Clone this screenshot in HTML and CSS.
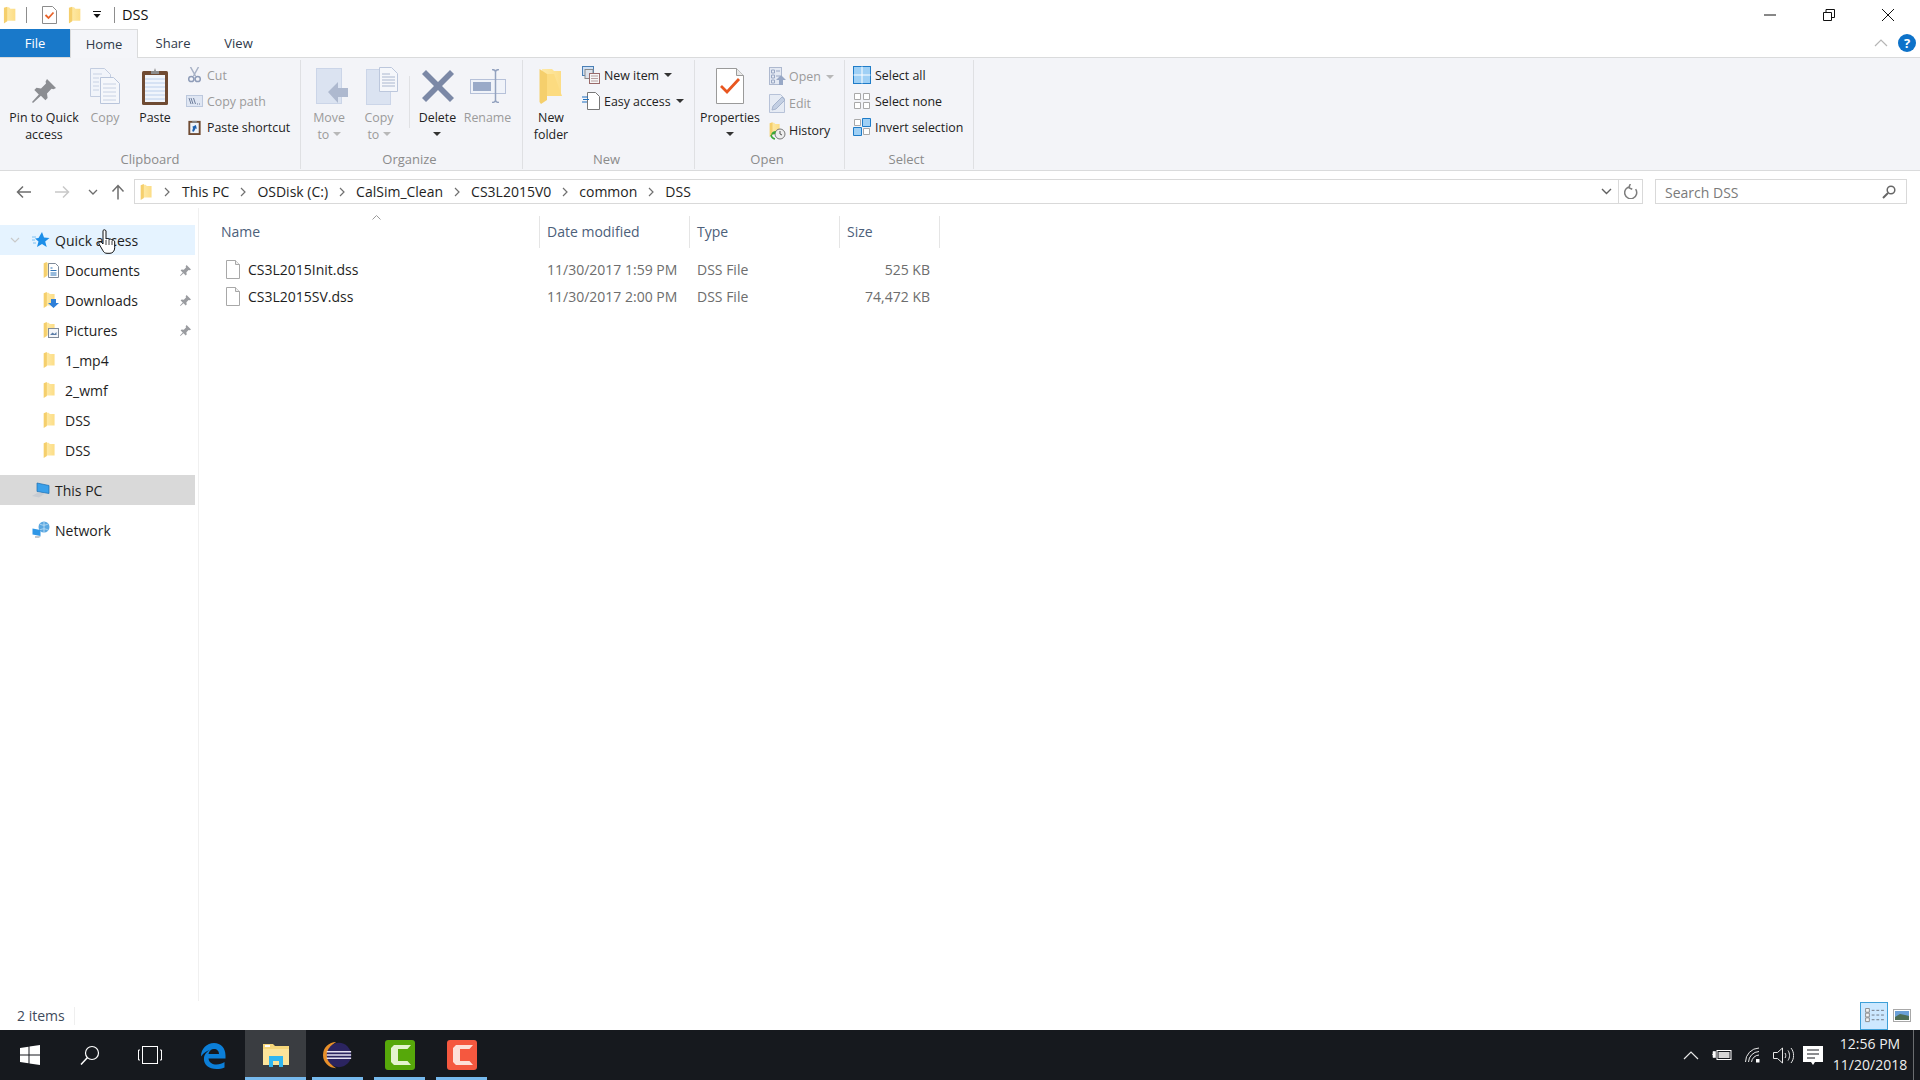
FILE: index.html
```html
<!DOCTYPE html>
<html lang="en">
<head>
<meta charset="utf-8">
<title>DSS</title>
<link rel="stylesheet" href="styles.css">
</head>
<body>
<svg class="sprite" aria-hidden="true">
  <defs>
    <linearGradient id="fg" x1="0" y1="0" x2="1" y2="0"><stop offset="0" stop-color="#feeaa8"/><stop offset="1" stop-color="#fcdd86"/></linearGradient>
    <symbol id="folder" viewBox="0 0 14 20">
      <path d="M3 1.500h3.500l1.500 1.500h5.500v13.500H3z" fill="url(#fg)"/>
      <path d="M.8 2 4.500 .8V17l-3.700 2.400z" fill="#f5cf6c"/>
    </symbol>
    <symbol id="doc" viewBox="0 0 16 19">
      <path d="M1.500.5h9l4 4v14h-13z" fill="#fff" stroke="#a8a8a8"/>
      <path d="M10.500.5v4h4" fill="#efefef" stroke="#a8a8a8"/>
    </symbol>
    <symbol id="pin" viewBox="0 0 13 13">
      <path d="M7.600 1 12 5.400 10.800 6.300 9.600 6l-2.200 2.200.3 2.200-1 1-2.200-2.200L1.500 12 1 11.500l2.800-3L1.600 6.400l1-1 2.200.3L7 3.500l-.3-1.200z" fill="#9a9ca0"/>
    </symbol>
  </defs>
</svg>

<div class="window">
  <header class="titlebar">
    <svg class="qa-folder"><use href="#folder"/></svg>
    <span class="qa-sep"></span>
    <svg class="qa-check" viewBox="0 0 15 18"><path d="M.5.5h10l4 4v13H.5z" fill="#fff" stroke="#8c8c8c"/><path d="M3.500 9l3 3 5-5.500" fill="none" stroke="#e8632a" stroke-width="1.800"/></svg>
    <svg class="qa-folder2"><use href="#folder"/></svg>
    <svg class="qa-drop" viewBox="0 0 8 7"><path d="M0 0h8v1H0zM.5 3h7L4 7z" fill="#111"/></svg>
    <span class="qa-sep qa-sep-2"></span>
    <span class="title-text">DSS</span>
    <div class="win-controls">
      <button class="win-btn"><svg viewBox="0 0 12 12"><path d="M0 6h12" stroke="#111" fill="none"/></svg></button>
      <button class="win-btn"><svg viewBox="0 0 12 12"><path d="M.5 3.500h8v8h-8zM3 3.500V.5h8.500v8h-3" stroke="#111" fill="none"/></svg></button>
      <button class="win-btn"><svg viewBox="0 0 12 12"><path d="M0 0l12 12M12 0L0 12" stroke="#111" fill="none"/></svg></button>
    </div>
  </header>

  <nav class="tabs">
    <span class="tab tab-file">File</span>
    <span class="tab tab-home">Home</span>
    <span class="tab tab-share">Share</span>
    <span class="tab tab-view">View</span>
    <div class="tabs-right">
      <svg class="collapse" viewBox="0 0 14 8"><path d="M1 7l6-6 6 6" fill="none" stroke="#b5b5b5" stroke-width="1.200"/></svg>
      <span class="help">?</span>
    </div>
  </nav>

  <section class="ribbon">
    <div class="group g-clipboard">
      <div class="group-body">
        <div class="big w-pin">
          <div class="big-icon"><svg class="i-pin" viewBox="0 0 26 25"><path d="M16 1l9 9-2.500 1.200-2-.4-4.500 4.700.6 4.500-2.200 2.200-4.500-4.500L2 25l-1-1 6.800-7.500-4.500-4.500 2.200-2.200 4.500.6L15 5.500l-.4-2z" fill="#8b8d92"/></svg></div>
          <span>Pin to Quick<br>access</span>
        </div>
        <div class="big w-copy dis">
          <div class="big-icon"><svg class="i-copy" viewBox="0 0 30 36"><path d="M.5.5h14l6 6v22H.5z" fill="#f1f4fa" stroke="#c3cde0"/><path d="M10.500 9.500h13l6 6v20h-19z" fill="#f5f7fb" stroke="#b9c5db"/><path d="M3 6h9M3 10h6M3 14h6M3 18h6M3 22h6M13 16h13M13 20h13M13 24h13M13 28h13M13 32h13" stroke="#c8d2e4"/></svg></div>
          <span>Copy</span>
        </div>
        <div class="big w-paste">
          <div class="big-icon"><svg class="i-paste" viewBox="0 0 26 37"><rect x="0" y="3" width="26" height="34" rx="1.500" fill="#6f4b33"/><rect x="3" y="7" width="20" height="27" fill="#f0f5fc"/><path d="M3 11h20M3 15h20M3 19h20M3 23h20M3 27h20M3 31h20" stroke="#bcd0ec"/><path d="M9 3h3l1-3 1 3h3v3H9z" fill="#8c8c8c"/></svg></div>
          <span>Paste</span>
        </div>
        <div class="small-col">
          <div class="small dis"><svg class="i-s" viewBox="0 0 14 16"><path d="M3 0l5 9M11 0L6 9" stroke="#a8b2c6" stroke-width="1.500" fill="none"/><circle cx="3.800" cy="12" r="2.600" fill="none" stroke="#8e9cb8" stroke-width="1.500"/><circle cx="10.200" cy="12" r="2.600" fill="none" stroke="#8e9cb8" stroke-width="1.500"/></svg><span>Cut</span></div>
          <div class="small dis"><svg class="i-s" viewBox="0 0 17 12"><rect x=".5" y=".5" width="16" height="11" fill="#dfe6f3" stroke="#bcc8dd"/><path d="M3 3l2 6M5 3l2 6M7.500 3l2 6M11 9h1M13 9h1" stroke="#6f7f9d" fill="none"/></svg><span>Copy path</span></div>
          <div class="small"><svg class="i-s" viewBox="0 0 14 17"><rect x=".5" y="2" width="13" height="15" fill="#6f4b33"/><rect x="2.500" y="4" width="9" height="11" fill="#eef3fa"/><path d="M4.500 2h5v2h-5z" fill="#888"/><path d="M4.500 13l1-4 -1.200-.5L8.500 6.500l1 4-1.200-.6-2 3.600z" fill="#1c5fae"/></svg><span>Paste shortcut</span></div>
        </div>
      </div>
      <div class="group-label label-first">Clipboard</div>
    </div>

    <div class="group g-organize">
      <div class="group-body">
        <div class="big w-move dis">
          <div class="big-icon"><svg class="i-move" viewBox="0 0 32 36"><rect x=".5" y=".5" width="25" height="35" fill="#dbe3f1" stroke="#cbd5e8"/><path d="M12 24 22 14v6h10v9H22v6z" fill="#aeb9cf"/></svg></div>
          <span>Move<br>to <i class="caret caret-dis"></i></span>
        </div>
        <div class="big w-copyto dis">
          <div class="big-icon"><svg class="i-copyto" viewBox="0 0 32 38"><rect x=".5" y="2.500" width="24" height="35" fill="#dbe3f1" stroke="#cbd5e8"/><path d="M13.500.5h12l6 6v18h-18z" fill="#f5f7fb" stroke="#bcc7dc"/><path d="M16 7h8M16 10h13M16 13h13M16 16h13M16 19h13" stroke="#aab7cf"/></svg></div>
          <span>Copy<br>to <i class="caret caret-dis"></i></span>
        </div>
        <span class="inner-sep"></span>
        <div class="big w-delete">
          <div class="big-icon"><svg class="i-delete" viewBox="0 0 32 32"><path d="M4 0l12 12L28 0l4 4-12 12 12 12-4 4-12-12L4 32l-4-4 12-12L0 4z" fill="#7b88a6"/></svg></div>
          <span>Delete<br><i class="caret"></i></span>
        </div>
        <div class="big w-rename dis">
          <div class="big-icon"><svg class="i-rename" viewBox="0 0 36 34"><rect x=".5" y="10.500" width="35" height="14" fill="#f0f3f9" stroke="#b6c1d9"/><rect x="3" y="13" width="18" height="9" fill="#9aaac8"/><path d="M22 .5c2 0 3 .6 3.500 2C26 1.100 27 .5 29 .5M25.500 2.500v29M22 33.500c2 0 3-.6 3.500-2 .5 1.400 1.500 2 3.500 2" fill="none" stroke="#93a2bf" stroke-width="1.500"/></svg></div>
          <span>Rename</span>
        </div>
      </div>
      <div class="group-label">Organize</div>
    </div>

    <div class="group g-new">
      <div class="group-body">
        <div class="big w-newfolder">
          <div class="big-icon"><svg class="i-newfolder" viewBox="0 0 24 36"><path d="M3 1h10l2 2h7v25H3z" fill="url(#fg)"/><path d="M.5 1 8 6v26l-6 4-1.500-2z" fill="#f5cf6c"/><path d="M8 6h7l8 22H8z" fill="#fcdb80"/></svg></div>
          <span>New<br>folder</span>
        </div>
        <div class="small-col">
          <div class="small"><svg class="i-s2" viewBox="0 0 18 18"><rect x=".5" y=".5" width="11" height="9" fill="#cfe0f5" stroke="#4a7fb5"/><rect x="3" y="3.500" width="8" height="9" fill="#dde3ec" stroke="#8a8a8a"/><rect x="7.500" y="7.500" width="10" height="10" fill="#f6f6f6" stroke="#9a6a6a"/><path d="M9 10h7M9 12.500h7M9 15h7" stroke="#b7a0a0"/></svg><span>New item</span><i class="caret"></i></div>
          <div class="small"><svg class="i-s2" viewBox="0 0 18 18"><path d="M5.500.5h8l4 4v13h-12z" fill="#fff" stroke="#777"/><path d="M0 5h6M1 7.500h6M0 10h5" stroke="#1c6fc0"/></svg><span>Easy access</span><i class="caret"></i></div>
        </div>
      </div>
      <div class="group-label">New</div>
    </div>

    <div class="group g-open">
      <div class="group-body">
        <div class="big w-props">
          <div class="big-icon"><svg class="i-props" viewBox="0 0 28 36"><path d="M.5.5h20l7 7v28H.5z" fill="#fff" stroke="#9a9a9a"/><path d="M20.500.5v7h7" fill="#e8e8e8" stroke="#9a9a9a"/><path d="M5 18l6 6 12-13" fill="none" stroke="#e8561f" stroke-width="2.800"/></svg></div>
          <span>Properties<br><i class="caret"></i></span>
        </div>
        <div class="small-col small-col-open">
          <div class="small dis"><svg class="i-s3" viewBox="0 0 17 19"><rect x=".5" y=".5" width="12" height="17" fill="#e4e9f3" stroke="#aeb9cf"/><path d="M2.500 3h3v3h-3zM2.500 8h3v3h-3zM2.500 13h3v3h-3zM7 4h4M7 9h4" stroke="#9aa8c4" fill="none"/><path d="M12 8l5 5h-3v5h-4v-5H7z" fill="#98a8c6"/></svg><span>Open</span><i class="caret caret-dis"></i></div>
          <div class="small dis"><svg class="i-s3" viewBox="0 0 17 19"><path d="M.5.5h11l4 4v14H.5z" fill="#e6ebf4" stroke="#b7c2d8"/><path d="M3 16l1-4L13 3l3 3-9 9z" fill="#c3cfe3" stroke="#a6b4cd"/></svg><span>Edit</span></div>
          <div class="small"><svg class="i-s3" viewBox="0 0 17 19"><use href="#folder" width="11" height="17"/><circle cx="11" cy="13" r="5" fill="#eee" stroke="#777"/><path d="M11 10v3l2 1" stroke="#555" fill="none"/><path d="M2 14a5 5 0 0 1 5-4l-1 3z" fill="#3aa63a"/><path d="M2 14a5 5 0 0 0 4 4" stroke="#3aa63a" stroke-width="1.500" fill="none"/></svg><span>History</span></div>
        </div>
      </div>
      <div class="group-label">Open</div>
    </div>

    <div class="group g-select">
      <div class="group-body">
        <div class="small-col">
          <div class="small"><svg class="i-s4" viewBox="0 0 18 18"><rect x=".5" y=".5" width="17" height="17" fill="#9fd0f5" stroke="#1f7cc8"/><path d="M9 .5v17M.5 9h17" stroke="#fff" stroke-width="1"/></svg><span>Select all</span></div>
          <div class="small"><svg class="i-s4" viewBox="0 0 18 18"><path d="M1.500 1.500h6v6h-6zM10.500 1.500h6v6h-6zM1.500 10.500h6v6h-6zM10.500 10.500h6v6h-6z" fill="#fff" stroke="#a9a9a9"/></svg><span>Select none</span></div>
          <div class="small"><svg class="i-s4" viewBox="0 0 18 18"><path d="M1.500 1.500h6v6h-6zM10.500 10.500h6v6h-6z" fill="#fff" stroke="#a9a9a9"/><path d="M9.500.5h8v8h-8zM.5 9.500h8v8h-8z" fill="#9fd0f5" stroke="#1f7cc8"/></svg><span>Invert selection</span></div>
        </div>
      </div>
      <div class="group-label">Select</div>
    </div>
  </section>

  <div class="addr-row">
    <span class="nav n-back"><svg viewBox="0 0 16 14"><path d="M15 7H2M7 1.500 1.500 7 7 12.500" fill="none" stroke="#6d6d6d" stroke-width="1.500"/></svg></span>
    <span class="nav n-fwd"><svg viewBox="0 0 16 14"><path d="M1 7h13M9 1.500 14.500 7 9 12.500" fill="none" stroke="#c8c8c8" stroke-width="1.500"/></svg></span>
    <span class="nav n-drop"><svg viewBox="0 0 10 6"><path d="M1 1l4 4 4-4" fill="none" stroke="#6d6d6d" stroke-width="1.300"/></svg></span>
    <span class="nav n-up"><svg viewBox="0 0 14 16"><path d="M7 15.500V2M1.500 7.500 7 1.500l5.500 6" fill="none" stroke="#6d6d6d" stroke-width="1.500"/></svg></span>
    <div class="address">
      <svg class="addr-folder"><use href="#folder"/></svg>
      <span class="crumb-sep crumb-first"><svg viewBox="0 0 6 10"><path d="M1 1l4 4-4 4" fill="none" stroke="#707070" stroke-width="1.200"/></svg></span>
      <span class="crumb">This PC</span>
      <span class="crumb-sep"><svg viewBox="0 0 6 10"><path d="M1 1l4 4-4 4" fill="none" stroke="#707070" stroke-width="1.200"/></svg></span>
      <span class="crumb">OSDisk (C:)</span>
      <span class="crumb-sep"><svg viewBox="0 0 6 10"><path d="M1 1l4 4-4 4" fill="none" stroke="#707070" stroke-width="1.200"/></svg></span>
      <span class="crumb">CalSim_Clean</span>
      <span class="crumb-sep"><svg viewBox="0 0 6 10"><path d="M1 1l4 4-4 4" fill="none" stroke="#707070" stroke-width="1.200"/></svg></span>
      <span class="crumb">CS3L2015V0</span>
      <span class="crumb-sep"><svg viewBox="0 0 6 10"><path d="M1 1l4 4-4 4" fill="none" stroke="#707070" stroke-width="1.200"/></svg></span>
      <span class="crumb">common</span>
      <span class="crumb-sep"><svg viewBox="0 0 6 10"><path d="M1 1l4 4-4 4" fill="none" stroke="#707070" stroke-width="1.200"/></svg></span>
      <span class="crumb">DSS</span>
      <span class="addr-drop"><svg viewBox="0 0 11 7"><path d="M1 1l4.500 4.500L10 1" fill="none" stroke="#606060" stroke-width="1.400"/></svg></span>
      <span class="addr-refresh"><svg viewBox="0 0 14 15"><path d="M4 3.500a6 6 0 1 0 6 0M3 1v4h4" fill="none" stroke="#7d7d7d" stroke-width="1.500" transform="rotate(25 7 8)"/></svg></span>
    </div>
    <div class="search">
      <span>Search DSS</span>
      <svg viewBox="0 0 14 14"><circle cx="9" cy="5" r="3.800" fill="none" stroke="#666" stroke-width="1.500"/><path d="M6 8l-5 5" stroke="#666" stroke-width="2"/></svg>
    </div>
  </div>

  <main class="content">
    <aside class="sidebar">
      <div class="tree-row top hover">
        <svg class="chev" viewBox="0 0 10 6"><path d="M1 1l4 4 4-4" fill="none" stroke="#c9c9c9" stroke-width="1.200"/></svg>
        <svg class="top-icon" viewBox="0 0 18 18"><path d="M10 1l2 5.500 5.500.4-4.300 3.500 1.500 5.600L10 13l-5 3 1.500-5.600L3 7.500l3.500-.5z" fill="#1c8ee8"/><path d="M0 6h4M0 9h3M1 12h3" stroke="#7cc0f2"/></svg>
        <span>Quick access</span>
      </div>
      <div class="tree-row sub"><span class="sub-icon"><svg viewBox="0 0 16 19"><use href="#folder" width="12" height="18"/><path d="M5.500 2.500h7l3 3v11h-10z" fill="#fff" stroke="#7f8a99"/><path d="M7.500 7h2M7.500 9.500h6M7.500 12h6M7.500 14h6" stroke="#2f74b8"/></svg></span><span class="lbl">Documents</span><svg class="pin"><use href="#pin"/></svg></div>
      <div class="tree-row sub"><span class="sub-icon"><svg viewBox="0 0 16 19"><use href="#folder" width="12" height="18"/><path d="M8 8h5v4h3l-5.500 5L5 12h3z" fill="#2f80d8"/></svg></span><span class="lbl">Downloads</span><svg class="pin"><use href="#pin"/></svg></div>
      <div class="tree-row sub"><span class="sub-icon"><svg viewBox="0 0 16 19"><use href="#folder" width="12" height="18"/><rect x="5.500" y="7.500" width="10" height="9" fill="#f4f6f9" stroke="#7f8a99"/><path d="M7 14l2.500-2.500 2 1.500 2-2v3z" fill="#5c7ea8"/></svg></span><span class="lbl">Pictures</span><svg class="pin"><use href="#pin"/></svg></div>
      <div class="tree-row sub"><span class="sub-icon"><svg viewBox="0 0 16 19"><use href="#folder" width="12" height="18"/></svg></span><span class="lbl">1_mp4</span></div>
      <div class="tree-row sub"><span class="sub-icon"><svg viewBox="0 0 16 19"><use href="#folder" width="12" height="18"/></svg></span><span class="lbl">2_wmf</span></div>
      <div class="tree-row sub"><span class="sub-icon"><svg viewBox="0 0 16 19"><use href="#folder" width="12" height="18"/></svg></span><span class="lbl">DSS</span></div>
      <div class="tree-row sub"><span class="sub-icon"><svg viewBox="0 0 16 19"><use href="#folder" width="12" height="18"/></svg></span><span class="lbl">DSS</span></div>
      <div class="tree-row top selected">
        <span class="chev"></span>
        <svg class="top-icon" viewBox="0 0 18 16"><path d="M5 1l12 2.500v8L5 9.500z" fill="#3aa0ea" stroke="#1c6fb0" stroke-width=".7"/><path d="M0 14l6-3.500 7 1-6 4z" fill="#c8ccd2"/></svg>
        <span>This PC</span>
      </div>
      <div class="tree-row top net">
        <span class="chev"></span>
        <svg class="top-icon" viewBox="0 0 18 18"><circle cx="12" cy="6" r="5.500" fill="#5aa7e0"/><path d="M8 3c3 2 6 1 8 0M8 9c3-2 6-1 8 0M12 .5v11" stroke="#c7e3f7" fill="none" stroke-width=".8"/><path d="M.5 7.500l8 1.500v6l-8-1.500z" fill="#2e96e6"/><path d="M3 15h6l-2 2H3z" fill="#c2c7cd"/></svg>
        <span>Network</span>
      </div>
    </aside>

    <section class="files">
      <div class="cols head">
        <div class="hcell hname">Name<svg class="sort" viewBox="0 0 9 5"><path d="M.5 4.500l4-4 4 4" fill="none" stroke="#9a9a9a"/></svg></div>
        <div class="hcell">Date modified</div>
        <div class="hcell">Type</div>
        <div class="hcell">Size</div>
      </div>
      <div class="rows">
        <div class="cols frow">
          <div class="fname"><svg class="ficon"><use href="#doc"/></svg><span>CS3L2015Init.dss</span></div>
          <div class="fcell">11/30/2017 1:59 PM</div>
          <div class="fcell">DSS File</div>
          <div class="fcell fsize">525 KB</div>
        </div>
        <div class="cols frow">
          <div class="fname"><svg class="ficon"><use href="#doc"/></svg><span>CS3L2015SV.dss</span></div>
          <div class="fcell">11/30/2017 2:00 PM</div>
          <div class="fcell">DSS File</div>
          <div class="fcell fsize">74,472 KB</div>
        </div>
      </div>
    </section>
  </main>

  <div class="status">
    <span class="count">2 items</span>
    <span class="status-sep"></span>
    <div class="views">
      <span class="view view-on"><svg viewBox="0 0 20 16"><path d="M.5.5h4v4h-4zM.5 5.500h4v4h-4zM.5 10.500h4v4h-4z" fill="#f4f4f4" stroke="#8a8a8a"/><path d="M7 2.500h3M12 2.500h3M17 2.500h3M7 7.500h3M12 7.500h3M17 7.500h3M7 12.500h3M12 12.500h3M17 12.500h3" stroke="#6d7480"/></svg></span>
      <span class="view"><svg viewBox="0 0 18 13"><rect x=".5" y=".5" width="17" height="12" fill="#fff" stroke="#a8a8a8"/><rect x="2" y="2" width="14" height="9" fill="#6aa0d8"/><path d="M2 8l5-3 5 1 4 1v4H2z" fill="#4d6d55"/></svg></span>
    </div>
  </div>

  <footer class="taskbar">
    <span class="tb tb-start"><svg viewBox="0 0 20 20"><path d="M0 3l8.500-1.200V9.500H0zM9.500 1.600 20 0v9.500H9.500zM0 10.500h8.500v7.700L0 17zM9.500 10.500H20V20L9.500 18.400z" fill="#fff"/></svg></span>
    <span class="tb tb-search"><svg viewBox="0 0 20 20"><circle cx="12" cy="8" r="6.500" fill="none" stroke="#fff" stroke-width="1.200"/><path d="M7.500 12.500 1 19.500" stroke="#fff" stroke-width="1.500"/></svg></span>
    <span class="tb tb-tasks"><svg viewBox="0 0 24 18"><rect x="4.500" y=".5" width="15" height="17" fill="none" stroke="#fff"/><path d="M2 4H.5v10H2M22 4h1.500v10H22" fill="none" stroke="#fff"/></svg></span>
    <span class="tb tb-edge"><svg viewBox="0 0 26 26"><path d="M1 14C1 6 7 .5 14 .5c7 0 11.500 5 11.500 12.500v3H8.500c.5 4 4 6 8 6 3 0 6-1 8-2.500v5.500c-2.500 1.200-5 1.500-8 1.500C9 26.500 3 22 4 15c.6-4 4-7 7-8C7 8 4 10 1 14zM8.500 11.500h10.500c0-3-2-5-5-5s-5 2-5.500 5z" fill="#0c7fd8"/></svg></span>
    <span class="tb app app-explorer"><svg viewBox="0 0 28 24"><path d="M1 1h10l2 2h14v19H1z" fill="#f6d77a"/><rect x="3" y="2" width="5" height="2" fill="#fff"/><rect x="1" y="6" width="26" height="16" fill="#fbe49a"/><path d="M7 24V13h14v11h-4v-6h-6v6z" fill="#2fb6f0"/></svg></span>
    <span class="tb app app-eclipse"><svg viewBox="0 0 32 30"><path d="M14 1A14 14 0 0 0 14 29 16 16 0 0 1 14 1z" fill="#e8902a"/><circle cx="17" cy="15" r="13" fill="#2b2460"/><path d="M4 11.500h26M4 15h26M4 18.500h26" stroke="#e6e2f4" stroke-width="1.600"/></svg></span>
    <span class="tb app app-green"><svg viewBox="0 0 30 30"><rect width="30" height="30" rx="3" fill="#56a80a"/><path d="M9 5h17l-3.500 4H13v12h9.500l3.500 4H9l-3-3V8z" fill="#e4f3cf"/></svg></span>
    <span class="tb app app-red"><svg viewBox="0 0 30 30"><rect width="30" height="30" rx="3" fill="#f5583f"/><path d="M9 5h17l-3.500 4H13v12h9.500l3.500 4H9l-3-3V8z" fill="#fde0d8"/></svg></span>
    <div class="tray">
      <span class="tr"><svg class="t-caret" viewBox="0 0 16 9"><path d="M1 8l7-7 7 7" fill="none" stroke="#e8e8e8" stroke-width="1.200"/></svg></span>
      <span class="tr tr-wide"><svg class="t-batt" viewBox="0 0 20 14"><rect x="5" y="2.500" width="14" height="9" fill="#16191e" stroke="#fff"/><rect x="6.500" y="4" width="11" height="6" fill="#d6d6d6"/><path d="M0 6.500h3M1 3.500h2.500v6H1z" fill="#fff" stroke="#fff" stroke-width=".6"/></svg></span>
      <span class="tr tr-wide"><svg class="t-wifi" viewBox="0 0 16 16"><path d="M.5 15A14 14 0 0 1 14 1M3.500 15A11 11 0 0 1 14 4.500M6.500 15A8 8 0 0 1 14 8" fill="none" stroke="#e8e8e8"/><rect x="11" y="12" width="3.500" height="3.500" fill="#fff"/></svg></span>
      <span class="tr"><svg class="t-vol" viewBox="0 0 21 17"><path d="M.5 5.500h4l5-4.500v15l-5-4.500h-4z" fill="none" stroke="#e8e8e8"/><path d="M12 6c1 1.500 1 3.500 0 5M15 3.500c2 3 2 7 0 10M18 1c3.500 4.500 3.500 10.500 0 15" fill="none" stroke="#e8e8e8"/></svg></span>
      <span class="tr"><svg class="t-note" viewBox="0 0 20 19"><path d="M0 0h20v16h-8l-2 3-2-3H0z" fill="#fff"/><path d="M4 4h12M4 8h12M4 12h8" stroke="#16191e"/></svg></span>
      <div class="clock"><span>12:56 PM</span><span>11/20/2018</span></div>
      <span class="show-desktop"></span>
    </div>
  </footer>

  <svg class="cursor" viewBox="0 0 18 26"><path d="M5 1.500c1-1 2.500-1 3 .5v8c1-1 2.500-.5 3 .5 1-.8 2.500-.5 3 .8 1-.5 2.500 0 2.700 1.500v6c0 3-2 5.500-4.700 5.500H9c-2 0-3.200-1-4-2.500L1 15c-.8-1.500 1-3 2.500-1.500L5 15z" fill="#fff" stroke="#111" stroke-width="1"/><path d="M8 11v5M11 11v5M14 12v4" stroke="#111" stroke-width=".8"/></svg>
</div>
</body>
</html>
```

FILE: styles.css
```css
* { box-sizing: border-box; }
html, body { margin: 0; padding: 0; }
body {
  width: 1920px;
  height: 1080px;
  overflow: hidden;
  background: #fff;
  font-family: "Open Sans", "Liberation Sans", sans-serif;
  font-size: 14px;
  color: #1e1e1e;
}
svg { display: block; flex: none; }
.sprite { width: 0; height: 0; overflow: hidden; }
.window {
  position: relative;
  width: 1920px;
  height: 1080px;
  display: flex;
  flex-direction: column;
}

/* title bar */
.titlebar { height: 29px; display: flex; align-items: center; flex: none; }
.qa-folder { width: 13px; height: 18px; margin-left: 3px; }
.qa-sep { width: 1px; height: 16px; background: #8d8d8d; margin-left: 10px; }
.qa-check { width: 15px; height: 18px; margin-left: 15px; }
.qa-folder2 { width: 13px; height: 18px; margin-left: 11px; }
.qa-drop { width: 8px; height: 7px; margin-left: 12px; }
.qa-sep-2 { margin-left: 13px; }
.title-text { margin-left: 7px; font-size: 14.5px; color: #111; }
.win-controls { margin-left: auto; margin-right: 3px; display: flex; }
.win-btn {
  width: 59px; height: 29px; padding: 0; border: 0; background: none;
  display: flex; align-items: center; justify-content: center;
}
.win-btn svg { width: 12px; height: 12px; }

/* tabs */
.tabs { height: 29px; flex: none; display: flex; align-items: stretch; border-bottom: 1px solid #dadbdc; font-size: 13px; }
.tab { display: flex; align-items: center; justify-content: center; height: 28px; color: #2f3a4a; }
.tab-file { width: 70px; background: #1979ca; color: #fff; }
.tab-home { width: 68px; height: 29px; background: #f4f5f9; border: 1px solid #dadbdc; border-bottom: 0; }
.tab-share { width: 70px; }
.tab-view { width: 61px; }
.tabs-right { margin-left: auto; display: flex; align-items: center; padding-right: 4px; }
.collapse { width: 14px; height: 8px; }
.help {
  width: 18px; height: 18px; margin-left: 10px; border-radius: 50%;
  background: #0d72c9; color: #fff; font-weight: 700; font-size: 13px;
  display: flex; align-items: center; justify-content: center;
}

/* ribbon */
.ribbon {
  height: 113px; flex: none; display: flex; background: #f3f4f8;
  border-bottom: 1px solid #dadbdc; font-size: 12.4px; color: #222;
}
.group { display: flex; flex-direction: column; margin: 2px 0 1px; border-right: 1px solid #dfe0e3; }
.group-body { flex: 1; display: flex; }
.group-label { height: 18px; line-height: 17px; margin-top: -1px; padding-right: 5px; text-align: center; color: #8b8b8b; font-size: 13px; }
.label-first { padding-right: 0; }
.g-clipboard { width: 301px; }
.g-organize { width: 222px; padding-left: 1px; }
.g-new { width: 172px; padding-left: 1px; }
.g-open { width: 150px; }
.g-select { width: 129px; }

.big { display: flex; flex-direction: column; align-items: center; text-align: center; line-height: 17px; white-space: nowrap; }
.big-icon { height: 49px; padding-top: 3px; display: flex; align-items: center; justify-content: center; flex: none; }
.w-pin { width: 80px; margin-left: 4px; }
.w-copy { width: 42px; }
.w-paste { width: 58px; }
.w-move { width: 54px; }
.w-copyto { width: 46px; }
.w-delete { width: 41px; }
.w-rename { width: 59px; }
.w-newfolder { width: 54px; }
.w-props { width: 70px; }
.dis { color: #9b9b9b; }

.i-pin { width: 26px; height: 25px; margin-top: 8px; }
.i-copy { width: 30px; height: 36px; }
.i-paste { width: 26px; height: 37px; }
.i-move { width: 32px; height: 36px; margin-left: 6px; }
.i-copyto { width: 32px; height: 38px; margin-left: 6px; }
.i-delete { width: 32px; height: 32px; }
.i-rename { width: 36px; height: 34px; }
.i-newfolder { width: 24px; height: 36px; }
.i-props { width: 28px; height: 36px; }

.inner-sep { width: 1px; height: 52px; margin: 16px 7px 0; background: #e0e1e4; }
.caret {
  display: inline-block; width: 0; height: 0; vertical-align: middle;
  border-left: 4px solid transparent; border-right: 4px solid transparent; border-top: 4px solid #333;
}
.big .caret { vertical-align: 3px; }
.caret-dis { border-top-color: #b8b8b8; }

.small-col { padding-top: 2px; display: flex; flex-direction: column; }
.small { height: 26px; display: flex; align-items: center; padding-left: 2px; white-space: nowrap; }
.small .caret { margin-left: 5px; }
.small-col-open { padding-top: 3px; }
.small-col-open .small { height: 27px; padding-left: 4px; }
.i-s { width: 17px; height: 16px; margin-right: 4px; }
.i-s2 { width: 18px; height: 18px; margin: 0 4px 0 1px; }
.i-s3 { width: 17px; height: 19px; margin-right: 3px; }
.i-s4 { width: 18px; height: 18px; margin-right: 4px; }
.g-select .small { padding-left: 8px; }
.g-new .small { padding-left: 3px; }

/* address row */
.addr-row { height: 37px; flex: none; display: flex; align-items: flex-start; padding-top: 8px; }
.nav { height: 25px; display: flex; align-items: center; justify-content: center; flex: none; }
.n-back { width: 38px; margin-left: 5px; }
.n-back svg, .n-fwd svg { width: 16px; height: 14px; }
.n-fwd { width: 38px; }
.n-drop { width: 23px; }
.n-drop svg { width: 10px; height: 6px; }
.n-up { width: 28px; }
.n-up svg { width: 14px; height: 16px; }
.address {
  flex: 1; height: 25px; margin-left: 2px; margin-right: 12px;
  border: 1px solid #d9d9d9; display: flex; align-items: center;
}
.addr-folder { width: 12px; height: 18px; margin-left: 5px; }
.crumb { color: #1e1e1e; white-space: nowrap; }
.crumb-sep { width: 28px; display: flex; justify-content: center; }
.crumb-sep svg { width: 6px; height: 10px; }
.crumb-first { width: 30px; }
.addr-drop {
  margin-left: auto; width: 25px; height: 23px; display: flex; align-items: center; justify-content: center;
  border-right: 1px solid #d9d9d9;
}
.addr-drop svg { width: 11px; height: 7px; }
.addr-refresh { width: 23px; height: 23px; display: flex; align-items: center; justify-content: center; }
.addr-refresh svg { width: 14px; height: 15px; }
.search {
  width: 252px; height: 25px; margin-right: 13px; flex: none;
  border: 1px solid #d9d9d9; display: flex; align-items: center; justify-content: space-between;
  padding: 1px 10px 0 9px; color: #7a7a7a;
}
.search svg { width: 14px; height: 14px; }

/* main */
.content { flex: 1; display: flex; min-height: 0; }
.sidebar { width: 199px; flex: none; padding-top: 17px; padding-right: 3px; border-right: 1px solid #f0f0f0; }
.tree-row { height: 30px; display: flex; align-items: center; white-space: nowrap; }
.hover { background: #e5f3ff; }
.selected { background: #d9d9d9; margin-top: 10px; }
.net { margin-top: 10px; }
.chev { width: 10px; height: 6px; margin-left: 10px; flex: none; }
.top-icon { width: 18px; height: 18px; margin-left: 12px; margin-right: 5px; }
.sub { padding-left: 43px; }
.sub-icon { width: 16px; height: 19px; flex: none; }
.sub-icon svg { width: 16px; height: 19px; }
.lbl { margin-left: 6px; }
.pin { width: 13px; height: 13px; margin-left: auto; margin-right: 3px; }

.files { flex: 1; padding-top: 8px; }
.cols { display: grid; grid-template-columns: 341px 150px 150px 100px; }
.head { height: 32px; }
.hcell { color: #4c607a; padding-left: 7px; border-right: 1px solid #e5e5e5; line-height: 32px; }
.hname { position: relative; padding-left: 22px; }
.sort { position: absolute; left: 173px; top: -1px; width: 9px; height: 5px; }
.rows { padding-top: 8px; }
.frow { height: 27px; align-items: center; }
.fname { display: flex; align-items: center; padding-left: 26px; }
.ficon { width: 16px; height: 19px; margin-right: 7px; }
.fcell { padding-left: 7px; color: #6d6d6d; white-space: nowrap; }
.fsize { text-align: right; padding-right: 10px; }

/* status */
.status { height: 29px; flex: none; display: flex; align-items: center; }
.count { margin-left: 17px; color: #3f4b5c; }
.status-sep { width: 1px; height: 18px; margin-left: 9px; background: #efefef; }
.views { margin-left: auto; margin-right: 9px; display: flex; align-items: center; }
.view { width: 18px; height: 28px; display: flex; align-items: center; justify-content: center; }
.view svg { width: 18px; height: 13px; }
.view-on { width: 28px; background: #cce8ff; border: 1px solid #3ea0d8; margin-right: 5px; }
.view-on svg { width: 19px; height: 15px; }

/* taskbar */
.taskbar { height: 50px; flex: none; display: flex; background: #16191e; color: #f2f2f2; }
.tb { width: 60px; height: 50px; display: flex; align-items: center; justify-content: center; flex: none; }
.tb-start svg { width: 20px; height: 20px; }
.tb-search svg { width: 20px; height: 20px; }
.tb-tasks svg { width: 24px; height: 18px; }
.tb-edge { margin-left: 2px; width: 61px; }
.tb-edge svg { width: 26px; height: 27px; }
.app { border-bottom: 3px solid #76b9ed; width: 51px; padding-top: 3px; }
.app svg { width: 30px; height: 30px; }
.app-explorer { width: 61px; margin-left: 2px; background: #3a3d41; }
.app-explorer svg { width: 28px; height: 24px; }
.app-eclipse { margin-left: 6px; }
.app-green, .app-red { margin-left: 11px; }
.tray { margin-left: auto; display: flex; align-items: center; }
.tr { width: 30px; height: 50px; display: flex; align-items: center; justify-content: center; flex: none; }
.tr-wide { width: 31px; }
.t-caret { width: 16px; height: 9px; }
.t-batt { width: 20px; height: 14px; }
.t-wifi { width: 16px; height: 16px; }
.t-vol { width: 21px; height: 17px; }
.t-note { width: 20px; height: 19px; }
.clock { width: 84px; display: flex; flex-direction: column; align-items: center; line-height: 21px; margin-top: -2px; white-space: nowrap; color: #efefef; }
.show-desktop { width: 7px; height: 50px; border-left: 1px solid #6a6d70; margin-left: 1px; }

.cursor { position: absolute; left: 98px; top: 229px; width: 18px; height: 26px; }
```
